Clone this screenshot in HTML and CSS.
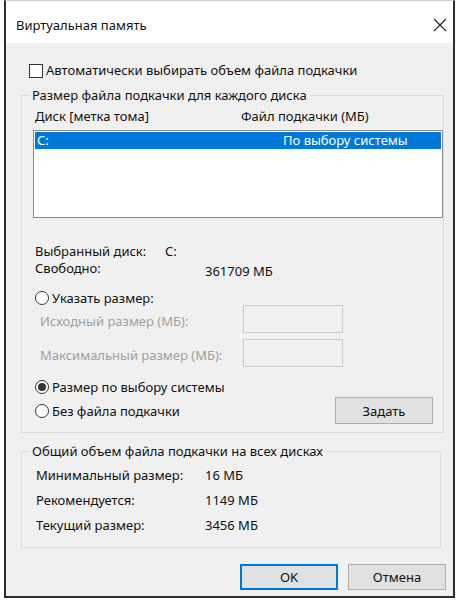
FILE: index.html
```html
<!DOCTYPE html>
<html lang="ru">
<head>
    <meta charset="UTF-8">
    <title>Виртуальная память</title>
    <link rel="stylesheet" href="styles.css">
</head>
<body>
    <div class="window">
        <div class="titlebar">
            <span class="title">Виртуальная память</span>
            <svg class="close" width="14" height="14" viewBox="0 0 14 14">
                <path d="M1 1 L13 13 M13 1 L1 13" stroke="#222" stroke-width="1.1" fill="none"/>
            </svg>
        </div>
        <div class="content">
            <label class="check-row">
                <span class="checkbox"></span>
                <span>Автоматически выбирать объем файла подкачки</span>
            </label>

            <fieldset class="group group-disks">
                <legend>Размер файла подкачки для каждого диска</legend>
                <div class="list-head">
                    <span class="col-disk">Диск [метка тома]</span>
                    <span class="col-file">Файл подкачки (МБ)</span>
                </div>
                <div class="listbox">
                    <div class="list-item selected">
                        <span class="col-disk">C:</span>
                        <span class="col-value">По выбору системы</span>
                    </div>
                </div>

                <div class="info-row selected-disk">
                    <span class="info-label">Выбранный диск:</span>
                    <span>C:</span>
                </div>
                <div class="info-row free">
                    <span class="info-label free-label">Свободно:</span>
                    <span class="free-value">361709 МБ</span>
                </div>

                <div class="radio-row custom">
                    <span class="radio"></span>
                    <span>Указать размер:</span>
                </div>
                <div class="size-row first">
                    <span class="size-label">Исходный размер (МБ):</span>
                    <span class="size-input"></span>
                </div>
                <div class="size-row">
                    <span class="size-label">Максимальный размер (МБ):</span>
                    <span class="size-input"></span>
                </div>

                <div class="radio-row system">
                    <span class="radio checked"></span>
                    <span>Размер по выбору системы</span>
                </div>
                <div class="radio-row nofile">
                    <span class="radio"></span>
                    <span class="grow">Без файла подкачки</span>
                    <button class="btn btn-set">Задать</button>
                </div>
            </fieldset>

            <fieldset class="group group-total">
                <legend>Общий объем файла подкачки на всех дисках</legend>
                <div class="total-row">
                    <span class="total-label">Минимальный размер:</span>
                    <span>16 МБ</span>
                </div>
                <div class="total-row">
                    <span class="total-label">Рекомендуется:</span>
                    <span>1149 МБ</span>
                </div>
                <div class="total-row">
                    <span class="total-label">Текущий размер:</span>
                    <span>3456 МБ</span>
                </div>
            </fieldset>

            <div class="buttons">
                <button class="btn btn-ok">OK</button>
                <button class="btn">Отмена</button>
            </div>
        </div>
    </div>
</body>
</html>
```

FILE: styles.css
```css
*{
    box-sizing: border-box;
    margin: 0;
    padding: 0;
}
body{
    background: #fff;
    font-family: "Noto Sans", "Liberation Sans", sans-serif;
    font-size: 13px;
    color: #111;
}
.window{
    width: 451px;
    height: 598px;
    margin-left: 4px;
    border: 2px solid #2e2e2e;
    border-top: 1px solid #cfcfcf;
    background: #f0f0f0;
    display: flex;
    flex-direction: column;
}
.titlebar{
    height: 42px;
    background: #fff;
    display: flex;
    align-items: center;
    padding: 6px 0 0 10px;
}
.title{
    flex: 1;
    font-size: 13px;
}
.close{
    margin-right: 6px;
}
.content{
    flex: 1;
    display: flex;
    flex-direction: column;
}

/* checkbox */
.check-row{
    display: flex;
    align-items: center;
    height: 17px;
    line-height: 17px;
    margin: 19px 0 0 23px;
}
.checkbox{
    width: 14px;
    height: 14px;
    border: 1px solid #333;
    background: #fff;
    margin-right: 3px;
}

/* group boxes */
.group{
    border: 1px solid #dcdcdc;
    margin: 8px 12px 0 15px;
    padding: 0 0 8px 11px;
}
.group legend{
    margin-left: -3px;
    padding: 0 3px 0 2px;
    line-height: 16px;
}
.list-head{
    display: flex;
    height: 16px;
    line-height: 16px;
    margin-top: 5px;
    padding-left: 2px;
}
.col-disk{
    width: 206px;
}
.listbox{
    width: 410px;
    height: 88px;
    margin-top: 6px;
    border: 1px solid #8a8a8a;
    background: #fff;
    padding: 1px;
}
.list-item{
    display: flex;
    height: 17px;
    line-height: 17px;
    padding-left: 2px;
}
.list-item.selected{
    background: #0078d7;
    color: #fff;
}
.list-item .col-disk{
    width: 246px;
}

.info-row{
    display: flex;
    height: 16px;
    line-height: 16px;
    padding-left: 2px;
}
.selected-disk{
    margin-top: 25px;
}
.free{
    margin-top: 1px;
}
.info-label{
    width: 130px;
}
.free-label{
    width: 170px;
}
.free-value{
    margin-top: 3px;
}

.radio-row{
    display: flex;
    align-items: center;
    height: 16px;
    line-height: 16px;
    padding-left: 2px;
}
.radio{
    width: 14px;
    height: 14px;
    border: 1px solid #333;
    border-radius: 50%;
    background: #fff;
    margin-right: 3px;
    display: flex;
    align-items: center;
    justify-content: center;
}
.radio.checked::after{
    content: "";
    width: 8px;
    height: 8px;
    border-radius: 50%;
    background: #333;
}
.custom{
    margin-top: 14px;
}
.size-row{
    display: flex;
    align-items: center;
    height: 28px;
    margin-top: 6px;
    padding-left: 7px;
    color: #a0a0a0;
}
.size-row.first{
    margin-top: -1px;
}
.size-label{
    width: 203px;
    padding-top: 3px;
}
.size-input{
    width: 100px;
    height: 28px;
    border: 1px solid #cccccc;
    background: #f0f0f0;
}
.system{
    margin-top: 12px;
}
.nofile{
    height: 27px;
    margin-top: 2px;
}
.grow{
    flex: 1;
}

.btn{
    width: 98px;
    height: 26px;
    border: 1px solid #adadad;
    background: #e1e1e1;
    font-family: inherit;
    font-size: 13px;
    color: #111;
}
.btn-set{
    height: 27px;
    margin-right: 10px;
}

.group-total{
    margin-top: 10px;
    padding-bottom: 14px;
}
.total-row{
    display: flex;
    height: 16px;
    line-height: 16px;
    padding-left: 3px;
    margin-top: 8px;
}
.total-row + .total-row{
    margin-top: 9px;
}
.total-label{
    width: 169px;
}

.buttons{
    display: flex;
    justify-content: flex-end;
    gap: 10px;
    margin-top: 16px;
    padding-right: 7px;
}
.btn-ok{
    border-color: #0078d7;
    box-shadow: inset 0 0 0 1px #0078d7;
}
```
